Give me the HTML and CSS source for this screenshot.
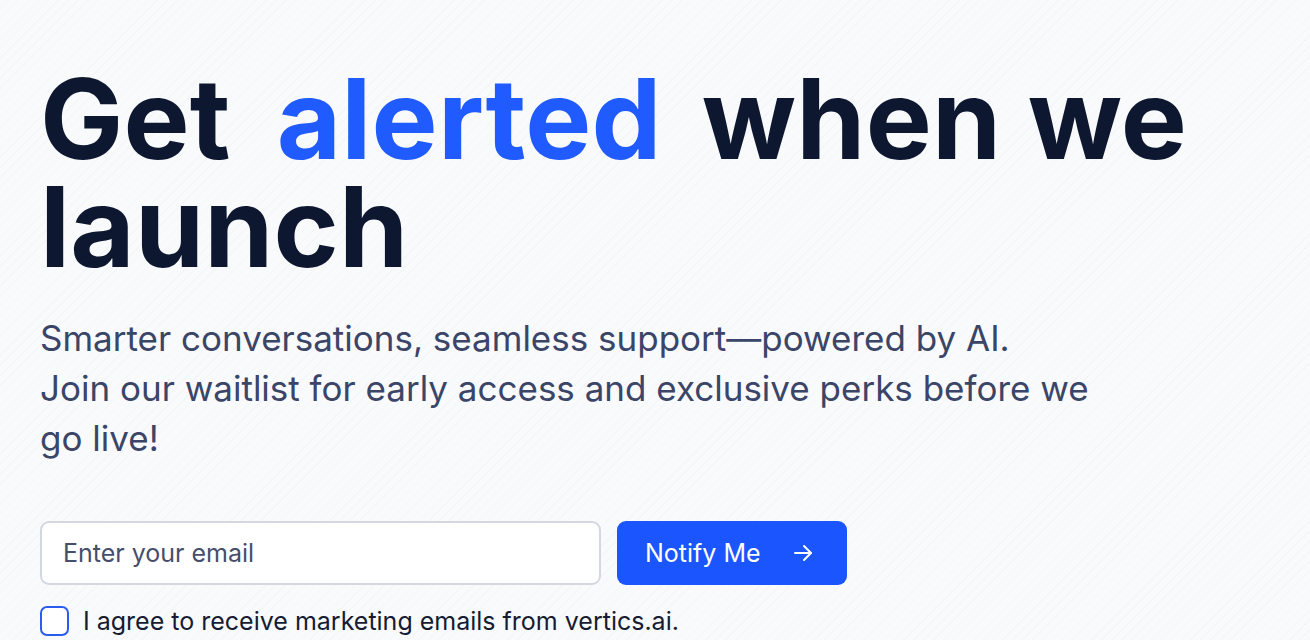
FILE: index.html
```html
<!DOCTYPE html>
<html lang="en">
<head>
<meta charset="utf-8">
<title>Waitlist</title>
<link rel="stylesheet" href="styles.css">
</head>
<body>
<main class="hero">
  <h1 class="title"><span class="tline"><span class="word">Get</span><span class="word accent">alerted</span><span class="word">when we</span></span><span class="tline"><span class="word">launch</span></span></h1>
  <p class="lead"><span class="line">Smarter conversations, seamless support—powered by AI.</span><br><span class="line">Join our waitlist for early access and exclusive perks before we</span> <span class="line">go live!</span></p>
  <form class="signup">
    <div class="row">
      <input class="email" type="email" placeholder="Enter your email">
      <button class="notify" type="button">Notify Me
        <svg class="arrow" viewBox="0 0 24 24" width="24" height="24" fill="none" stroke="currentColor" stroke-width="2" stroke-linecap="round" stroke-linejoin="round"><path d="M4 12h16"/><path d="M13 5l7 7-7 7"/></svg>
      </button>
    </div>
    <label class="agree"><span class="box"></span>I agree to receive marketing emails from vertics.ai.</label>
  </form>
</main>
</body>
</html>
```
FILE: styles.css
```css
* { box-sizing: border-box; }
html, body { margin: 0; height: 100%; }
body {
  background-color: #f9fafb;
  background-image: repeating-linear-gradient(135deg, rgba(0,0,0,0) 0 6px, rgba(120,130,150,0.035) 6px 7px);
  font-family: Inter, "Liberation Sans", sans-serif;
  color: #0d1730;
  overflow: hidden;
}
.hero {
  padding: 65px 40px 0 40px;
}
.title {
  margin: 0;
  font-size: 111px;
  line-height: 108px;
  font-weight: 700;
  letter-spacing: 0.2px;
  color: #0d1730;
  display: flex;
  flex-direction: column;
}
.tline {
  display: flex;
  height: 108px;
  align-items: center;
  white-space: nowrap;
}
.word {
  display: block;
  height: 108px;
  line-height: 108px;
  white-space: nowrap;
}
.accent {
  color: #1f5bff;
  margin: 0 40px 0 46px;
}
.lead {
  margin: 32px 0 0 0;
  font-size: 35px;
  line-height: 50px;
  font-weight: 400;
  color: #3a4568;
  max-width: 1070px;
}
.line { white-space: nowrap; }
.signup { margin-top: 58px; }
.row {
  display: flex;
  gap: 16px;
  align-items: stretch;
}
.email {
  width: 561px;
  height: 64px;
  border: 2px solid #d3d7e1;
  border-radius: 9px;
  background: #fff;
  padding: 0 21px;
  font-family: inherit;
  font-size: 25px;
  color: #3a4568;
  outline: none;
}
.email::placeholder { color: #454e6c; }
.notify {
  width: 230px;
  height: 64px;
  border: 0;
  border-radius: 9px;
  background: #1b55fe;
  color: #fff;
  font-family: inherit;
  font-size: 25px;
  display: flex;
  align-items: center;
  justify-content: space-between;
  padding: 0 32px 0 28px;
  cursor: pointer;
}
.arrow { width: 24px; height: 24px; }
.agree {
  margin-top: 21px;
  display: flex;
  align-items: center;
  gap: 14px;
  font-size: 25px;
  color: #151c33;
}
.box {
  width: 29px;
  height: 30px;
  border: 2px solid #2b5cf0;
  border-radius: 7px;
  background: #fff;
  flex: none;
}
```
